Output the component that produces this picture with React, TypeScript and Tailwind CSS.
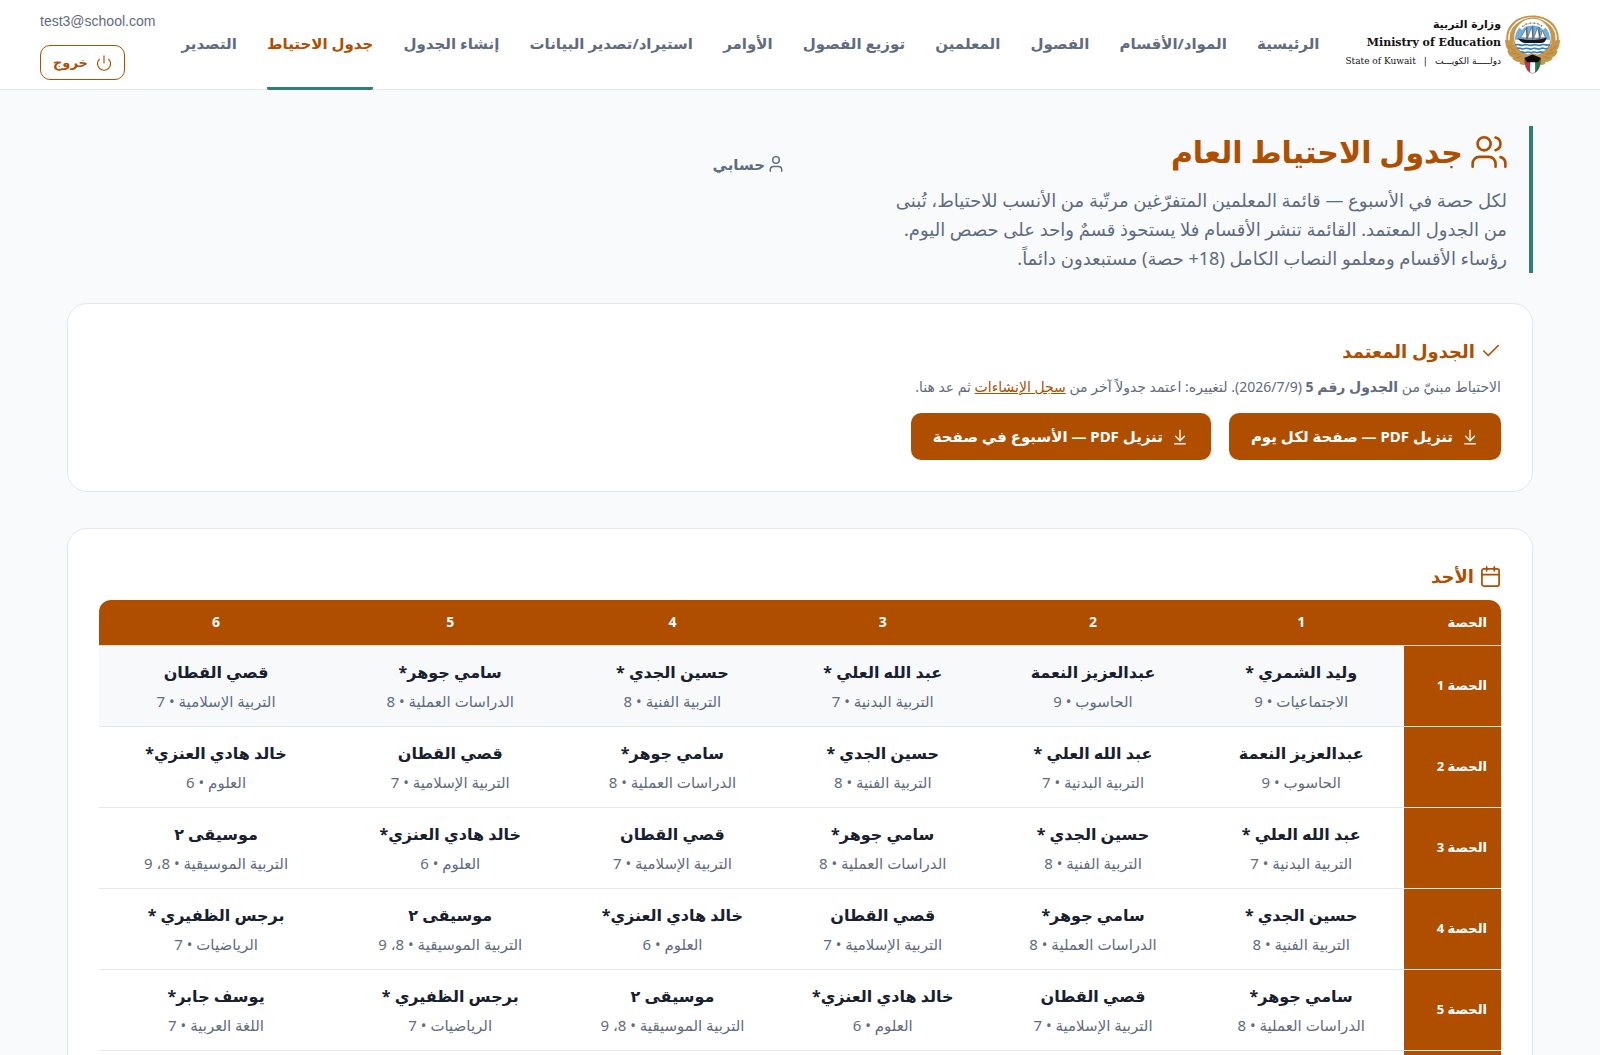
import { ArrowDownToLine, Calendar, Check, Power, User, Users } from "lucide-react";

const navItems = [
  "الرئيسية",
  "المواد/الأقسام",
  "الفصول",
  "المعلمين",
  "توزيع الفصول",
  "الأوامر",
  "استيراد/تصدير البيانات",
  "إنشاء الجدول",
  "جدول الاحتياط",
  "التصدير",
];
const activeItem = "جدول الاحتياط";

type Teacher = { name: string; info: string };

const walid: Teacher = { name: "وليد الشمري *", info: "الاجتماعيات • 9" };
const aziz: Teacher = { name: "عبدالعزيز النعمة", info: "الحاسوب • 9" };
const abdullah: Teacher = { name: "عبد الله العلي *", info: "التربية البدنية • 7" };
const hussein: Teacher = { name: "حسين الجدي *", info: "التربية الفنية • 8" };
const sami: Teacher = { name: "سامي جوهر*", info: "الدراسات العملية • 8" };
const qusai: Teacher = { name: "قصي القطان", info: "التربية الإسلامية • 7" };
const khaled: Teacher = { name: "خالد هادي العنزي*", info: "العلوم • 6" };
const music: Teacher = { name: "موسيقى ٢", info: "التربية الموسيقية • 8، 9" };
const barjas: Teacher = { name: "برجس الظفيري *", info: "الرياضيات • 7" };
const yousef: Teacher = { name: "يوسف جابر*", info: "اللغة العربية • 7" };

const rotation = [walid, aziz, abdullah, hussein, sami, qusai, khaled, music, barjas, yousef];
const ranks = [1, 2, 3, 4, 5, 6];
const periods = [1, 2, 3, 4, 5];

// Crops the empty margin round the 24-unit icon grid.
const tightBox = "1 1 22 22";

function Emblem() {
  return (
    <svg viewBox="0 0 166 177" className="h-[59px] w-[55px] shrink-0" role="img" aria-label="شعار دولة الكويت">
      <path d="M5 84C-4 38 30 1 83 1s87 37 78 83l-22 2C148 40 118 14 83 14S18 40 27 86z" fill="#c6964b" />
      <path d="M12 76C8 40 38 8 83 8s75 32 71 68" fill="none" stroke="#fff" strokeWidth="4" />
      <circle cx="83" cy="66" r="57" fill="#fff" stroke="#c6964b" strokeWidth="4" />
      <path d="M30 74C30 52 42 34 56 28h54c14 6 26 24 26 46z" fill="#6db0de" />
      <path d="M42 36C54 10 112 10 124 36l-9 9C102 27 64 27 51 45z" fill="#fff" />
      <path d="M52 35c16-15 46-15 62 0" fill="none" stroke="#777" strokeWidth="4" strokeDasharray="5 2 2 3" />
      <path d="M47 68l17-28 3 29zM68 69l12-33 5 33zM87 69l11-31 8 31zM106 68l7-22 9 22z" fill="#fff" stroke="#6b6055" strokeWidth="2" />
      <path d="M66 36v38M84 32v42M103 36v37" stroke="#333" strokeWidth="2" />
      <path d="M38 70c17 6 68 6 88-3-3 11-8 17-18 17H60c-9 0-16-6-22-14z" fill="#171717" />
      <path d="M30 90c10-6 17 5 27 0s16 5 26 0 16 5 26 0 17 4 27-1M36 101c9-6 14 5 23 0s15 5 24 0 15 5 24 0 14 4 22-1M46 112c8-5 12 4 19 0s11 4 18 0 11 4 18 0 12 3 18-1" fill="none" stroke="#2f7fc4" strokeWidth="5" />
      <path d="M0 74c17 2 27 12 34 23 10 14 22 22 33 24 8-7 24-7 32 0 11-2 23-10 33-24 7-11 17-21 34-23-1 18-5 26-10 32l3 1c-3 13-10 18-17 21l2 3c-7 8-15 11-23 10l1 5c-7 6-15 5-20 1H64c-5 4-13 5-20-1l1-5c-8 1-16-2-23-10l2-3c-7-3-14-8-17-21l3-1C5 100 1 92 0 74z" fill="#c6964b" />
      <path d="M11 93l20 16M19 113l24 6M32 130l18-6M155 93l-20 16M147 113l-24 6M134 130l-18-6" stroke="#a77731" strokeWidth="2" />
      <path d="M60 132h16v42c-10-7-17-20-16-42z" fill="#cf3045" />
      <path d="M76 132h15v43l-8 2-7-3z" fill="#fff" />
      <path d="M91 132h16c1 22-6 35-16 42z" fill="#1d7a49" />
      <path d="M60 132c-1 22 7 38 23 44 16-6 25-22 24-44" fill="none" stroke="#5b4a35" strokeWidth="1.5" />
      <path d="M58 129l25-10 26 10-9 13H67z" fill="#0c0c0c" />
    </svg>
  );
}

function Header() {
  return (
    <header className="flex h-[90px] items-center border-b border-[#e2e5ea] bg-white px-10">
      <a href="#home" className="flex shrink-0 items-center gap-1 text-[#111]">
        <Emblem />
        <span className="flex flex-col items-start pb-1 leading-[18px] whitespace-nowrap font-['DejaVu_Serif','DejaVu_Sans',serif]">
          <span className="text-[11px] font-bold">وزارة التربية</span>
          <span className="text-[11px] font-bold" dir="ltr">Ministry of Education</span>
          <span className="flex gap-2 text-[9px]">
            <span>دولـــــة الكويـــت</span>
            <span>|</span>
            <span>State of Kuwait</span>
          </span>
        </span>
      </a>
      <nav className="mx-[26px] flex flex-1 justify-between self-stretch text-[15px] font-bold whitespace-nowrap">
        {navItems.map((item) => (
          <a
            key={item}
            href="#section"
            aria-current={item === activeItem ? "page" : undefined}
            className="-mb-px flex items-center rounded-xs border-b-3 border-transparent text-[#5f6b80] aria-[current=page]:border-[#2f7f72] aria-[current=page]:text-[#b04e00]"
          >
            {item}
          </a>
        ))}
      </nav>
      <div className="flex shrink-0 flex-col items-end gap-3.5 pt-0.5">
        <span className="font-['Liberation_Sans',sans-serif] text-sm leading-5 text-[#5f6b80]" dir="ltr">
          test3@school.com
        </span>
        <button className="flex h-[35px] items-center gap-2 rounded-[10px] border border-[#b04e00] px-3 text-[13px] font-bold text-[#b04e00]">
          <Power size={16} strokeWidth={1.6} viewBox={tightBox} />
          خروج
        </button>
      </div>
    </header>
  );
}

function Hero() {
  return (
    <section className="flex items-start border-r-4 border-[#2f7f72] pr-[22px]">
      <div className="w-[722px]">
        <h1 className="flex items-center gap-2 text-3xl leading-[52px] font-bold text-[#b04e00]">
          <Users size={36} strokeWidth={1.6} viewBox={tightBox} />
          جدول الاحتياط العام
        </h1>
        <p className="mt-2 text-lg leading-[29px] whitespace-nowrap text-[#5f6b80]">
          لكل حصة في الأسبوع — قائمة المعلمين المتفرّغين مرتّبة من الأنسب للاحتياط، تُبنى
          <br />
          من الجدول المعتمد. القائمة تنشر الأقسام فلا يستحوذ قسمٌ واحد على حصص اليوم.
          <br />
          رؤساء الأقسام ومعلمو النصاب الكامل (18+ حصة) مستبعدون دائماً.
        </p>
      </div>
      <a href="#account" className="mt-6 flex items-center gap-0.5 text-[15px] leading-7 font-bold text-[#5f6b80]">
        <User size={18} strokeWidth={1.8} viewBox={tightBox} />
        حسابي
      </a>
    </section>
  );
}

function ApprovedCard() {
  return (
    <section className="mt-[30px] rounded-[20px] border border-[#e2e8f0] bg-white p-[31px]">
      <h2 className="flex items-center gap-1.5 text-lg leading-8 font-bold text-[#b04e00]">
        <Check size={20} strokeWidth={1.8} viewBox={tightBox} />
        الجدول المعتمد
      </h2>
      <p className="mt-2 text-sm leading-6 whitespace-nowrap text-[#5f6b80]">
        الاحتياط مبنيّ من <strong>الجدول رقم 5</strong> (2026/7/9). لتغييره: اعتمد جدولاً آخر من{" "}
        <a href="#history" className="text-[#b04e00] underline">سجل الإنشاءات</a> ثم عد هنا.
      </p>
      <div className="mt-3.5 flex gap-[18px]">
        {["تنزيل PDF — صفحة لكل يوم", "تنزيل PDF — الأسبوع في صفحة"].map((label) => (
          <button
            key={label}
            className="flex h-[47px] items-center gap-2 rounded-[10px] bg-[#b04e00] px-[22px] text-[15px] font-bold whitespace-nowrap text-white"
          >
            <ArrowDownToLine size={18} strokeWidth={1.8} />
            {label}
          </button>
        ))}
      </div>
    </section>
  );
}

function DayCard() {
  return (
    <section className="mt-9 rounded-[20px] border border-[#e2e8f0] bg-white p-[31px]">
      <h2 className="flex items-center gap-1.5 text-lg leading-8 font-bold text-[#b04e00]">
        <Calendar size={21} strokeWidth={1.8} viewBox={tightBox} />
        الأحد
      </h2>
      <div className="mt-2 overflow-hidden rounded-t-xl">
        <table className="w-full table-fixed border-collapse">
          <colgroup>
            <col className="w-[6.9%]" />
            <col className="w-[14.7%]" />
            <col className="w-[15%]" />
            <col className="w-[15%]" />
            <col className="w-[15%]" />
            <col className="w-[16.7%]" />
            <col className="w-[16.7%]" />
          </colgroup>
          <thead>
            <tr className="h-[45px] border-b border-[#f0dccb] bg-[#b04e00] text-sm font-bold text-white">
              <th scope="col" className="px-3.5 text-start text-[13px]">الحصة</th>
              {ranks.map((n) => (
                <th scope="col" key={n}>{n}</th>
              ))}
            </tr>
          </thead>
          <tbody>
            {periods.map((period) => (
              <tr key={period} className="h-[81px] border-b border-[#e2e8f0] first:bg-[#f7f9fb]">
                <th scope="row" className="bg-[#b04e00] px-3.5 text-start text-[13px] font-bold whitespace-nowrap text-white">
                  الحصة {period}
                </th>
                {rotation.slice(period - 1, period + 5).map((t) => (
                  <td key={t.name} className="text-center whitespace-nowrap">
                    <div className="text-base leading-[30px] font-bold text-[#17202e]">{t.name}</div>
                    <div className="text-[15px] leading-7 text-[#5f6b80]">{t.info}</div>
                  </td>
                ))}
              </tr>
            ))}
            <tr className="h-[81px]">
              <th scope="row" className="bg-[#b04e00]" />
              <td colSpan={6} />
            </tr>
          </tbody>
        </table>
      </div>
    </section>
  );
}

export default function App() {
  return (
    <div dir="rtl" className="min-h-screen bg-[#f8fafc] font-['Noto_Sans','DejaVu_Sans',sans-serif]">
      <Header />
      <main className="px-[67px] py-9">
        <Hero />
        <ApprovedCard />
        <DayCard />
      </main>
    </div>
  );
}
